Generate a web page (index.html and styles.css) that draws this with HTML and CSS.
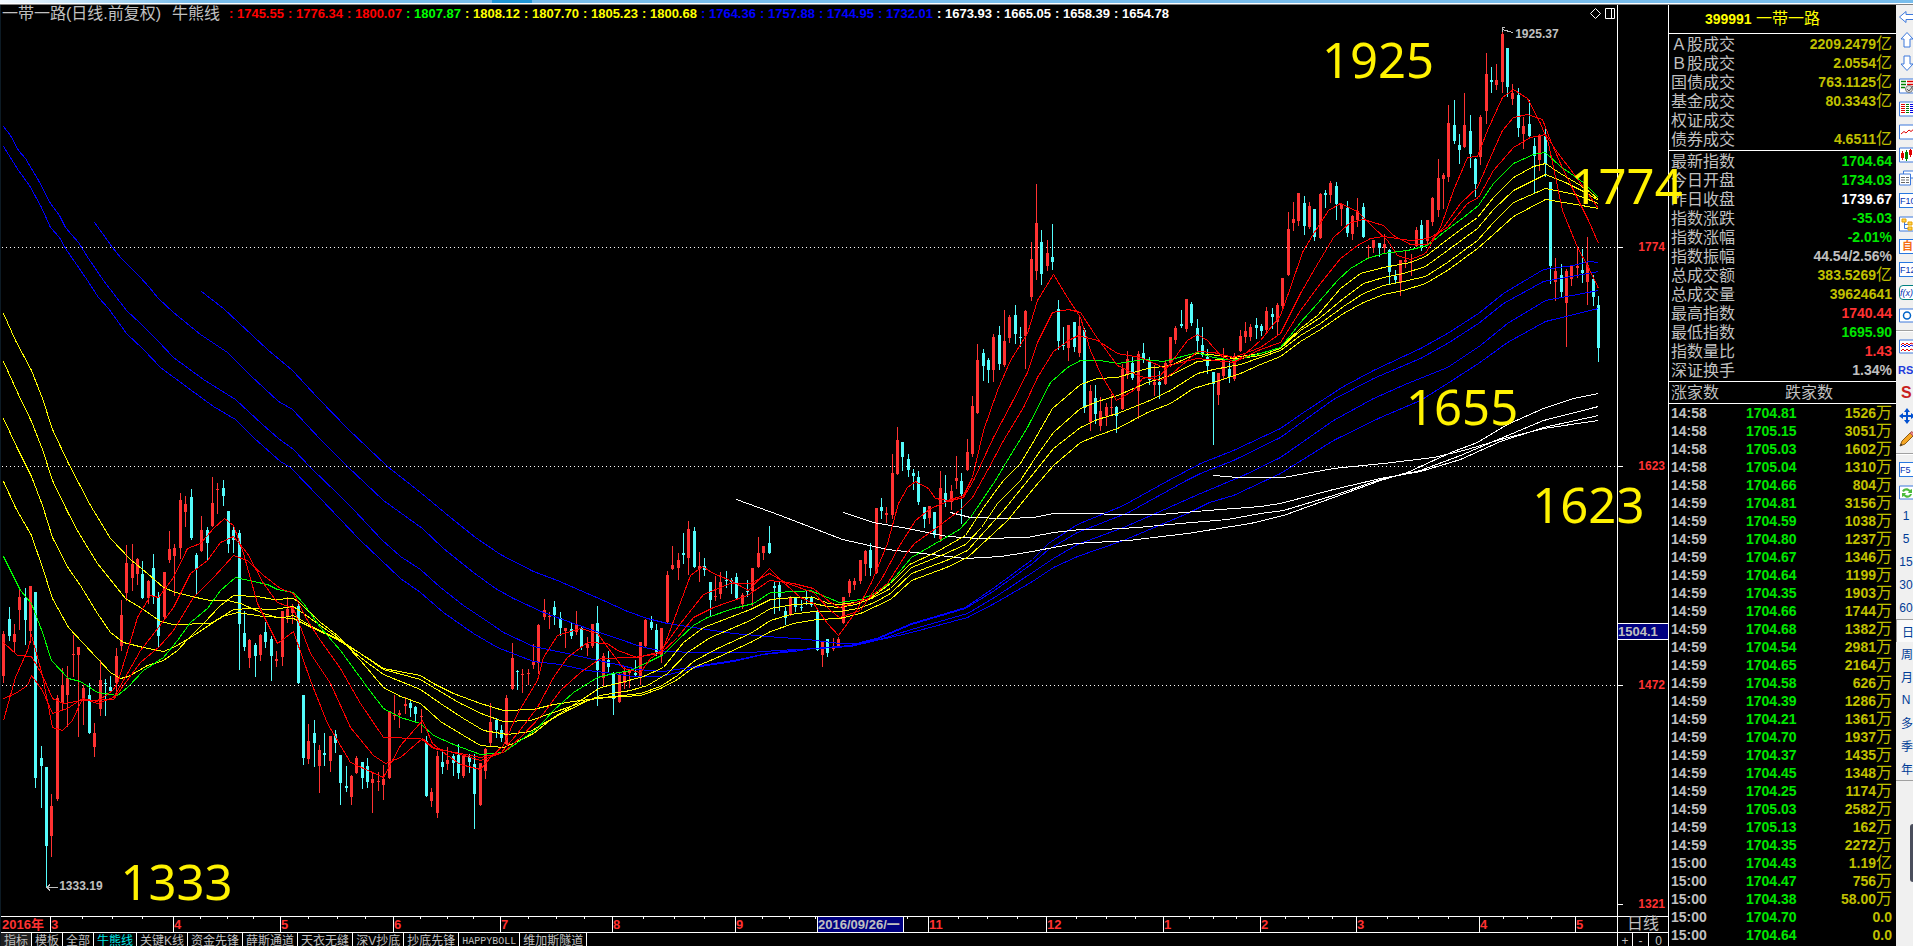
FILE: index.html
```html
<!DOCTYPE html>
<html lang="zh-CN">
<head>
<meta charset="utf-8">
<title>399991 一带一路</title>
<link rel="stylesheet" href="styles.css">
</head>
<body>
<div class="strip"><span class="strip-tab"></span></div>
<main class="app">
  <section class="chart">
    <div class="plot">
      <svg class="plot-svg" id="plot" viewBox="1 5 1616 911" preserveAspectRatio="none" aria-label="日线图"></svg>
      <header class="legend">
        <h1 class="legend-title"><span>一带一路(日线.前复权)</span><span>牛熊线</span></h1>
        <ul class="legend-values">
          <li class="red">: 1745.55</li><li class="red">: 1776.34</li><li class="red">: 1800.07</li><li class="green">: 1807.87</li><li class="yellow">: 1808.12</li><li class="yellow">: 1807.70</li><li class="yellow">: 1805.23</li><li class="yellow">: 1800.68</li><li class="blue">: 1764.36</li><li class="blue">: 1757.88</li><li class="blue">: 1744.95</li><li class="blue">: 1732.01</li><li class="white">: 1673.93</li><li class="white">: 1665.05</li><li class="white">: 1658.39</li><li class="white">: 1654.78</li>
        </ul>
        <svg class="legend-icons" width="28" height="14" viewBox="0 0 28 14"><path d="M1.500 6.500L6.500 1.500L11.500 6.500L6.500 11.500Z M16.500 1.500H25.500V11.500H16.500Z M22.500 1.500V11.500" fill="none" stroke="#fff"/></svg>
      </header>
      <span class="extreme extreme-high">1925.37</span>
      <span class="extreme extreme-low">1333.19</span>
    </div>
    <div class="price-axis" id="price-axis"><span class="cursor-price">1504.1</span></div>
    <div class="time-axis" id="time-axis"><span class="year">2016年</span><span class="cursor-date">2016/09/26/一</span></div>
    <div class="period">日线</div>
    <nav class="tabs">
      <button class="tab selected">指标</button><button class="tab">模板</button><button class="tab">全部</button><button class="tab active">牛熊线</button><button class="tab">关键K线</button><button class="tab">资金先锋</button><button class="tab">薛斯通道</button><button class="tab">天衣无缝</button><button class="tab">深V抄底</button><button class="tab">抄底先锋</button><button class="tab latin">HAPPYBOLL</button><button class="tab">维加斯隧道</button>
    </nav>
    <div class="zoomers"><button>+</button><button>-</button><button>0</button></div>
  </section>

  <aside class="quotes">
    <h2 class="quotes-title"><b>399991</b> 一带一路</h2>
    <table class="facts">
      <tr><th>Ａ股成交</th><td class="gold">2209.2479<i>亿</i></td></tr>
      <tr><th>Ｂ股成交</th><td class="gold">2.0554<i>亿</i></td></tr>
      <tr><th>国债成交</th><td class="gold">763.1125<i>亿</i></td></tr>
      <tr><th>基金成交</th><td class="gold">80.3343<i>亿</i></td></tr>
      <tr><th>权证成交</th><td></td></tr>
      <tr><th>债券成交</th><td class="gold">4.6511<i>亿</i></td></tr>
    </table>
    <table class="facts">
      <tr><th>最新指数</th><td class="up">1704.64</td></tr>
      <tr><th>今日开盘</th><td class="up">1734.03</td></tr>
      <tr><th>昨日收盘</th><td class="white">1739.67</td></tr>
      <tr><th>指数涨跌</th><td class="up">-35.03</td></tr>
      <tr><th>指数涨幅</th><td class="up">-2.01%</td></tr>
      <tr><th>指数振幅</th><td>44.54/2.56%</td></tr>
      <tr><th>总成交额</th><td class="gold">383.5269<i>亿</i></td></tr>
      <tr><th>总成交量</th><td class="gold">39624641</td></tr>
      <tr><th>最高指数</th><td class="hot">1740.44</td></tr>
      <tr><th>最低指数</th><td class="up">1695.90</td></tr>
      <tr><th>指数量比</th><td class="hot">1.43</td></tr>
      <tr><th>深证换手</th><td>1.34%</td></tr>
    </table>
    <div class="breadth"><span>涨家数</span><span>跌家数</span></div>
    <table class="ticks"><tbody id="ticks"></tbody></table>
  </aside>

  <nav class="tools">
    <button aria-label="后退"><svg width="22" height="16" viewBox="0 0 22 16"><path d="M.5 8L7 2.500V5.500H18V10.500H7V13.500Z" fill="#fff" stroke="#3c78dc"/></svg></button>
    <button aria-label="上"><svg width="22" height="16" viewBox="0 0 22 16"><path d="M8 .5L14 7H11V15H5V7H2Z" fill="#fff" stroke="#3c78dc"/></svg></button>
    <button aria-label="下"><svg width="22" height="16" viewBox="0 0 22 16"><path d="M8 15.500L14 9H11V1H5V9H2Z" fill="#fff" stroke="#3c78dc"/></svg></button>
    <button aria-label="报表"><svg width="22" height="16" viewBox="0 0 22 16"><path d="M.5 1H21V15H.5Z" fill="#fff" stroke="#3c78dc"/><path d="M2 3.500H7M2 6.500H7M2 9.500H6" stroke="#008000" stroke-width="1.500"/><path d="M8 3.500H14M8 6.500H14" stroke="#e00000" stroke-width="1.500"/><circle cx="10" cy="11" r="3.500" fill="#ddd" stroke="#777"/><path d="M8 11L10 13L14 8" fill="none" stroke="#555"/></svg></button>
    <button aria-label="列表"><svg width="22" height="16" viewBox="0 0 22 16"><path d="M.5 1H21V15H.5Z" fill="#fff" stroke="#3c78dc"/><g stroke-dasharray="1 1"><path d="M4 3V13" stroke="#e00000" stroke-width="4"/><path d="M8.500 3V13" stroke="#008000" stroke-width="3"/><path d="M12.500 3V13" stroke="#0000e0" stroke-width="3"/></g></svg></button>
    <button aria-label="走势"><svg width="22" height="16" viewBox="0 0 22 16"><path d="M.5 1H21V15H.5Z" fill="#fff" stroke="#3c78dc"/><path d="M2 10L5 7.500L7 9L10 6L12 7.500L16 4" fill="none" stroke="#e00000"/></svg></button>
    <button aria-label="K线"><svg width="22" height="16" viewBox="0 0 22 16"><path d="M.5 1H21V15H.5Z" fill="#fff" stroke="#3c78dc"/><path d="M2 6H5V11H2ZM3 4H4V13H3ZM10 3H13V8H10ZM11 2H12V10H11Z" fill="#e00000"/><path d="M6 5H9V12H6ZM7 3H8V14H7Z" fill="#008000"/></svg></button>
    <button aria-label="窗口"><svg width="22" height="16" viewBox="0 0 22 16"><path d="M4.500 1H21V8H4.500Z" fill="#fff" stroke="#3c78dc"/><path d="M.5 4H11.500V15H.5Z" fill="#fff" stroke="#3c78dc"/><path d="M2 7.500H6M7 7.500H10M2 10H6M7 10H10M2 12.500H6M7 12.500H10" stroke="#666"/></svg></button>
    <button><span class="key">F10</span></button>
    <button aria-label="结构"><svg width="22" height="16" viewBox="0 0 22 16"><path d="M.5 1H21V15H.5Z" fill="#fff" stroke="#3c78dc"/><path d="M5.500 6V12.500H10M5.500 8.500H10" fill="none" stroke="#3c78dc"/><path d="M3 3H7V6H3ZM9 6H13V9H9ZM9 11H13V14H9Z" fill="#ffd44d" stroke="#e8a000"/></svg></button>
    <button><span class="key orange">自</span></button>
    <button><span class="key">F12</span></button>
    <button><span class="key fx">f(x)</span></button>
    <button aria-label="圆"><svg width="22" height="16" viewBox="0 0 22 16"><path d="M.5 1H21V14H.5Z" fill="#fff" stroke="#3c78dc"/><circle cx="8" cy="7.500" r="3.500" fill="none" stroke="#0064c8" stroke-width="1.500"/></svg></button>
    <hr>
    <button aria-label="波浪"><svg width="22" height="16" viewBox="0 0 22 16"><path d="M.5 1H21V14H.5Z" fill="#fff" stroke="#3c78dc"/><path d="M2 6L4 4L6 6L8 4L10 6L12 4L14 5M2 12L4 10L6 12L8 10L10 12L12 10L14 11" fill="none" stroke="#e00000"/><path d="M2 8L4 6L6 8L8 6L10 8L12 6L14 7" fill="none" stroke="#0000e0"/></svg></button>
    <button class="rsi">RSI</button>
    <button class="dollar">S</button>
    <button aria-label="移动"><svg width="22" height="16" viewBox="0 0 22 16"><path d="M8 0L11 4H9V7H12V5L16 8L12 11V9H9V12H11L8 16L5 12H7V9H4V11L0 8L4 5V7H7V4H5Z" fill="#0050d0"/></svg></button>
    <button aria-label="画线"><svg width="22" height="16" viewBox="0 0 22 16"><path d="M1 15L3 10L11 2L14 5L6 13Z" fill="#f5a623" stroke="#8a5a14"/><path d="M11 2L13 .5L15 3L14 5Z" fill="#e88" stroke="#a55"/><path d="M1 15L2 12.500L3.500 14Z" fill="#333"/></svg></button>
    <hr>
    <button><span class="key">F5</span></button>
    <button aria-label="刷新"><svg width="22" height="16" viewBox="0 0 22 16"><path d="M.5 1H21V14H.5Z" fill="#fff" stroke="#3c78dc"/><path d="M3 6C4 3 9 2 11 5L13 4V8H9L10 6.500C8 5 6 5 5 7ZM13 9C12 13 7 14 5 11L3 12V8H7L6 9.500C8 11 10 11 11 9Z" fill="#4cbb3c"/></svg></button>
    <button class="num">1</button><button class="num">5</button><button class="num">15</button><button class="num">30</button><button class="num">60</button>
    <button class="han pressed">日</button><button class="han">周</button><button class="han">月</button><button class="num">N</button><button class="han">多</button><button class="han">季</button><button class="han">年</button>
    <div class="tools-rest"><span class="thumb"></span></div>
  </nav>
</main>
<p class="note n1925">1925</p>
<p class="note n1774">1774</p>
<p class="note n1655">1655</p>
<p class="note n1623">1623</p>
<p class="note n1333">1333</p>
<script src="chart.js"></script>
</body>
</html>
```
FILE: styles.css
```css
* { box-sizing: border-box; }
body {
  margin: 0;
  height: 100vh;
  min-height: 946px;
  display: flex;
  flex-direction: column;
  position: relative;
  overflow: hidden;
  background: #000;
  color: #c0c0c0;
  font-family: "Liberation Sans", "Noto Sans CJK SC", sans-serif;
}
h1, h2, p, ul { margin: 0; padding: 0; font-weight: normal; }
button {
  margin: 0;
  padding: 0;
  border: 0;
  background: none;
  color: inherit;
  font: inherit;
}
.strip {
  flex: none;
  height: 5px;
  background: linear-gradient(90deg, #f4fafe 0, #78bdec 10%);
  border-bottom: 1px solid #808080;
  box-shadow: inset 0 -1px #fff;
}
.strip-tab {
  display: block;
  width: 40px;
  height: 3px;
  margin-left: 25.7%;
  background: #1e96d8;
}
.app { flex: 1; display: flex; min-height: 0; }

.chart {
  flex: 1;
  min-width: 0;
  display: grid;
  grid-template-columns: 1fr 51px;
  grid-template-rows: 1fr 16px 14px;
  border-left: 1px solid #0c1a24;
}
.plot { position: relative; border-right: 1px solid #fff; }
.plot-svg { position: absolute; inset: 0; width: 100%; height: 100%; }
.plot-svg path { fill: none; shape-rendering: crispEdges; vector-effect: non-scaling-stroke; }
.plot-svg .fill-up { fill: #ff3232; }
.plot-svg .fill-down { fill: #54fcfc; }
.plot-svg .grid { stroke: #fff; stroke-dasharray: 1 3; }
.plot-svg .arrow { stroke: #c0c0c0; }
.plot-svg .line-red { stroke: #f00; }
.plot-svg .line-green { stroke: #0f0; }
.plot-svg .line-yellow { stroke: #ff0; }
.plot-svg .line-blue { stroke: #00f; }
.plot-svg .line-white { stroke: #fff; }

.legend {
  position: relative;
  display: flex;
  align-items: center;
  height: 18px;
  padding-left: 1px;
}
.legend-title { display: flex; gap: 11px; font-size: 16px; line-height: 18px; width: 227px; white-space: nowrap; }
.legend-values {
  display: flex;
  flex: 1;
  list-style: none;
  font-weight: bold;
  font-size: 13px;
  line-height: 18px;
}
.legend-values li { width: 59px; white-space: pre; }
.red { color: #f00; }
.green { color: #0f0; }
.yellow { color: #ff0; }
.blue { color: #00f; }
.white { color: #fff; }
.extreme { position: absolute; font-weight: bold; font-size: 12px; line-height: 14px; }
.extreme-high { left: 93.7%; top: 22px; }
.extreme-low { left: 3.6%; bottom: 23px; }

.price-axis { position: relative; border-right: 1px solid #fff; }
.price {
  position: absolute;
  left: 0;
  right: 3px;
  margin-top: -8px;
  text-align: right;
  color: #ff3232;
  font-weight: bold;
  font-size: 12px;
  line-height: 16px;
}
.price::before {
  content: "";
  position: absolute;
  left: 0;
  top: 8px;
  width: 5px;
  height: 1px;
  background: #fff;
}
.cursor-price {
  position: absolute;
  top: 67.8%;
  left: 0;
  right: 0;
  height: 17px;
  border: solid #fff;
  border-width: 1px 0;
  background: #000080;
  font-weight: bold;
  font-size: 13px;
  line-height: 15px;
}
.time-axis {
  position: relative;
  border: solid #fff;
  border-width: 1px 1px 0 0;
  color: #ff3232;
  font-weight: bold;
  font-size: 13px;
  line-height: 15px;
}
.year { padding-left: 1px; }
.month { position: absolute; top: 0; height: 15px; border-left: 1px solid #fff; }
.minor { position: absolute; top: 0; width: 1px; height: 2px; background: #fff; }
.cursor-date {
  position: absolute;
  top: 0;
  left: 50.5%;
  width: 87px;
  height: 15px;
  overflow: hidden;
  border: solid #fff;
  border-width: 0 1px;
  background: #000080;
  color: #c0c0c0;
  white-space: nowrap;
}
.period {
  border: solid #fff;
  border-width: 1px 1px 0 0;
  text-align: center;
  font-size: 16px;
  line-height: 13px;
}
.tabs { display: flex; border: solid #fff; border-width: 1px 1px 0 0; overflow: hidden; }
.tab {
  border-right: 1px solid #fff;
  padding: 0 3px;
  height: 17px;
  font-size: 12px;
  line-height: 17px;
  white-space: nowrap;
}
.tab.selected { background: #202020; }
.tab.active { color: #00e6e6; }
.tab.latin { font-family: "Liberation Mono", monospace; font-size: 10px; }
.zoomers {
  display: grid;
  grid-template-columns: 15px 16px 1fr;
  overflow: hidden;
  border: solid #fff;
  border-width: 1px 1px 0 0;
}
.zoomers button { height: 17px; font-size: 12px; line-height: 15px; border-right: 1px solid #fff; }
.zoomers button:last-child { border-right: 0; }

.quotes { flex: none; width: 227px; }
.quotes-title {
  height: 29px;
  border-bottom: 1px solid #fff;
  color: #ff0;
  text-align: center;
  font-size: 16px;
  line-height: 27px;
  padding-right: 40px;
}
.quotes-title b { font-size: 14px; }
.facts, .ticks { width: 100%; border-collapse: collapse; }
.facts { border-bottom: 1px solid #fff; display: block; padding: 1px 0; }
.facts tbody { display: block; }
.facts tr { display: flex; justify-content: space-between; height: 19px; padding: 0 4px 0 2px; line-height: 19px; }
.facts th, .facts td { padding: 0; }
.facts th { font-weight: normal; font-size: 16px; }
.facts td, .ticks td { font-weight: bold; font-size: 14px; white-space: nowrap; }
.quotes i { font-style: normal; font-weight: normal; font-size: 16px; line-height: 0; }
.gold { color: #c0c000; }
.up { color: #00e600; }
.hot { color: #ff3232; }
.breadth {
  display: grid;
  grid-template-columns: 114px 1fr;
  height: 22px;
  padding-left: 2px;
  border-bottom: 1px solid #fff;
  font-size: 16px;
  line-height: 21px;
}
.ticks { table-layout: fixed; }
.ticks td { height: 18px; padding: 0; line-height: 18px; }
.ticks td:nth-child(1) { width: 77px; padding-left: 2px; }
.ticks td:nth-child(2) { width: 70px; }
.ticks td:nth-child(3) { text-align: right; padding-right: 4px; }

.tools { flex: none; width: 17px; overflow: hidden; background: #f0f0f0; display: flex; flex-direction: column; color: #003c96; }
.tools button { flex: none; display: flex; align-items: center; width: 28px; height: 23px; padding-left: 3px; font-size: 12px; }
.tools hr { flex: none; width: 100%; height: 2px; margin: 3px 0; border: 0; border-top: 1px solid #a0a0a0; background: #fff; }
.tools svg { display: block; }
.key { width: 24px; height: 15px; border: 1px solid #2878e0; background: #fff; font-size: 9px; line-height: 14px; text-align: left; color: #0032b4; }
.key.orange { padding-left: 2px; color: #f56e14; font-weight: bold; font-size: 11px; line-height: 13px; }
.key.fx { border-color: #008080; border-radius: 4px; font-style: italic; }
.tools .rsi { font-weight: bold; font-size: 11px; color: #1e3cdc; padding-left: 2px; }
.tools .dollar { font-weight: bold; font-size: 16px; color: #c81e1e; padding-left: 5px; }
.tools .num { width: 20px; justify-content: center; padding-left: 0; }
.tools .han { padding-left: 5px; }
.tools .pressed { border: solid #a0a0a0; border-width: 1px 0 0 1px; background: #fafafa; }
.tools-rest { flex: 1; border-top: 1px solid #a0a0a0; display: flex; justify-content: flex-end; padding-top: 43px; }
.thumb { width: 3px; height: 58px; border-radius: 3px 0 0 3px; background: #4a4e5c; }

.note {
  position: absolute;
  color: #fff200;
  font-family: "Noto Sans", "Open Sans", sans-serif;
  font-size: 49px;
  line-height: 50px;
}
.n1925 { left: 69.1%; top: 3.6%; }
.n1774 { left: 82.1%; top: 16.9%; }
.n1655 { left: 73.5%; top: 40.3%; }
.n1623 { left: 80.1%; top: 50.6%; }
.n1333 { left: 6.3%; top: 90.5%; }
```
FILE: chart.js
```js
// Candles: direction (r = rise, c = fall), then high, body top, body bottom, low.
const candles = `
r631,634,676,682 c607,619,636,640 r624,634,642,652 r589,597,610,629 c588,598,620,644 r586,586,631,642 c592,592,778,787 c746,758,766,807 c767,767,846,887 r794,806,836,856
r695,698,799,800 r668,685,703,709 r666,678,695,726 r635,654,655,676 r647,647,655,736 r685,688,699,724 c683,695,733,733 r723,733,747,756 r660,680,709,715 c679,683,684,715
c676,687,691,691 r648,656,683,695 r600,615,646,650 r545,563,593,600 r544,564,578,590 r558,559,574,584 c561,574,598,598 r580,581,598,603 c554,568,597,603 c592,597,636,647
r572,572,617,618 r531,549,560,562 r544,548,556,595 r493,500,548,558 r496,504,512,526 c489,497,538,539 c553,555,569,593 r516,530,551,551 c527,530,543,560 r477,503,526,526
r483,489,490,513 c480,488,496,505 c511,511,544,552 c526,530,540,552 c530,533,624,669 c611,633,647,650 r639,640,658,667 c643,645,656,676 r634,635,655,660 c622,632,642,647
c636,639,656,680 r651,659,661,666 r611,611,657,665 r597,609,617,622 r604,607,613,623 c602,606,683,683 c695,695,758,764 r724,741,759,763 c720,733,743,766 r745,750,766,792
c733,753,755,765 r736,736,761,771 c730,734,743,752 c755,755,783,804 c766,786,788,791 r775,776,797,804 r756,758,773,773 c762,762,778,788 c758,766,782,787 r772,779,783,812
r772,781,782,790 r765,779,785,799 r711,711,778,778 r695,715,716,719 r710,713,715,727 r697,704,706,713 c699,703,708,716 c706,707,714,722 r709,716,717,732 c736,741,796,796
r788,792,801,806 r751,756,813,817 c750,762,767,773 r747,760,764,769 c754,756,763,775 c744,755,773,778 r755,755,776,777 c754,757,762,772 c754,764,794,828 r763,763,805,805
r748,749,771,778 r703,722,743,745 c718,720,730,737 c725,730,738,741 r695,698,744,744 r643,658,689,689 c670,671,672,689 r669,674,675,692 r669,673,674,684 r644,662,665,668
r624,625,663,673 r599,610,617,619 r612,616,617,628 c601,607,615,624 c612,618,628,635 r628,628,631,647 c622,629,636,638 r611,625,632,634 c626,628,647,649 r637,644,648,655
r624,624,646,647 c606,623,670,705 r653,656,678,686 c651,660,667,672 c672,673,699,714 r673,674,702,702 r667,672,683,688 r669,671,673,687 c660,673,675,676 r642,642,676,684
r619,620,646,647 c616,622,628,629 c624,630,653,655 r628,628,655,662 r571,575,622,622 r546,565,569,569 r553,560,568,579 c533,553,555,563 r521,529,558,574 c527,531,567,567
r552,566,569,581 c558,566,570,575 c582,582,600,616 r576,596,597,600 r572,582,594,598 c571,580,581,587 c578,580,582,593 c573,577,598,598 r593,595,604,608 c580,591,592,596
r568,568,591,605 r537,553,567,567 r546,546,553,559 c526,543,553,553 c581,586,588,613 c581,585,597,610 c607,611,618,624 r596,597,615,615 c597,598,607,611 c600,607,608,610
c590,598,599,604 c596,597,605,606 c609,611,650,650 r642,642,655,666 c639,639,653,656 r638,648,649,650 r637,639,646,646 r597,597,623,623 r579,581,593,596 r578,581,585,589
r560,560,581,583 r550,551,564,575 c543,550,568,575 r508,508,573,573 c498,507,511,518 r507,513,515,522 r454,473,515,518 r427,440,474,474 c442,442,457,470 c454,459,470,476
c469,473,476,489 c471,477,502,504 c507,507,519,527 r506,506,518,523 c512,512,535,537 r471,488,539,541 c475,493,502,506 r485,491,502,509 r456,478,481,488 c473,481,494,523
r439,452,470,470 r396,406,454,456 r344,360,413,413 c349,353,366,380 c358,360,370,382 r334,337,370,381 c326,335,364,369 r310,341,365,366 r315,317,338,342 c305,315,334,343
c327,337,338,346 r310,311,336,368 r242,259,297,300 r184,223,271,279 c230,242,274,284 r240,253,266,270 c224,257,262,269 c300,309,341,349 c327,345,346,349 r325,325,348,360
c322,322,347,351 r315,326,353,356 c328,330,408,412 r385,391,422,430 c385,398,414,423 r397,411,426,430 r403,407,416,425 r394,407,408,415 c406,407,416,432 r364,369,409,409
r351,359,374,378 c357,363,378,379 r351,354,391,418 c343,353,359,362 c357,361,380,384 r365,382,385,395 c371,382,385,398 r361,363,384,384 r337,337,363,366 r326,328,340,343
c310,324,326,327 r299,299,329,331 c302,304,323,325 c319,328,341,351 c327,345,355,356 c349,357,366,373 c372,372,384,444 r373,373,395,404 r348,359,376,379 c361,369,377,382
r353,356,379,380 r330,336,351,351 r322,331,337,342 r324,327,337,340 c318,325,328,338 c324,326,331,335 r307,311,330,332 c308,314,317,328 r303,305,322,334 r278,278,306,309
r212,229,275,275 r202,219,223,230 r193,193,221,225 c196,203,226,234 r202,206,227,228 c209,209,237,240 r193,194,238,238 c190,193,195,207 r181,183,195,202 c182,186,204,219
r203,204,209,225 c201,208,233,236 r215,216,234,239 r198,211,220,226 c203,207,237,237 r245,247,248,258 r240,240,248,252 c243,243,248,256 r234,244,248,252 c249,250,272,283
c270,276,280,282 r260,260,283,295 r251,260,262,267 r254,261,262,275 r227,230,246,246 c220,225,247,250 r220,220,241,245 r197,198,222,225 r159,178,210,216 r173,175,179,208
r105,123,177,181 c100,125,141,143 c134,145,150,163 r93,125,147,147 c115,131,154,167 c158,159,184,196 r115,117,157,164 r53,74,111,123 c67,80,82,92 r64,80,85,89
r28,34,82,92 c48,48,87,96 r84,93,99,104 c88,95,128,136 r117,126,134,148 c100,124,136,136 c138,146,156,193 r134,135,160,170 c129,136,164,176 c182,182,266,283
r258,271,282,300 c264,275,292,296 r269,271,303,346 r266,266,279,285 r249,266,268,277 c249,270,273,282 r237,265,282,304 c275,279,297,305 c296,305,348,361
`.trim().split(/\s+/);

// Moving averages: colour, then the points of the line.
const averages = [
  ['blue', '3,146 18,170 29,185 41,207 50,227 59,237 65,248 74,261 87,280 98,297 108,308 126,333 143,349 160,367 187,387 213,406 235,419 253,437 280,461 290,467 320,498 359,539 400,578 420,592 443,612 473,633 497,647 533,661 560,664 587,670 613,673 633,676 660,676 677,672 700,666 733,661 763,654 793,651 813,648 850,645 860,642 876,638 911,623 935,616 965,607 994,587 1032,559 1048,543 1077,524 1123,505 1168,480 1200,463 1233,450 1280,428 1303,412 1343,386 1373,370 1420,348 1447,333 1478,313 1503,293 1543,269 1573,265 1588,261 1598,262'],
  ['blue', '3,126 10,135 18,150 25,158 37,178 50,203 59,215 65,227 78,242 88,258 103,280 126,310 140,323 157,340 173,357 203,379 235,399 262,424 278,438 293,449 310,467 337,493 353,509 381,539 400,556 420,569 440,587 463,605 490,623 503,632 533,646 567,653 593,659 617,664 637,669 663,671 683,668 707,664 733,660 767,653 800,649 850,646 876,639 911,624 965,608 994,590 1032,563 1048,549 1077,532 1128,512 1186,480 1200,473 1233,460 1280,437 1333,399 1373,378 1420,358 1447,343 1478,323 1503,303 1543,281 1598,271'],
  ['blue', '94,222 102,233 112,247 120,257 139,276 149,287 157,297 173,312 200,334 227,352 250,375 278,401 292,409 320,439 347,466 383,500 422,528 443,548 473,572 495,588 513,598 543,612 573,623 593,630 617,638 640,646 663,651 700,652 750,652 777,650 817,648 850,646 876,640 911,629 967,613 994,597 1032,572 1053,558 1077,544 1123,527 1155,513 1200,493 1243,475 1280,457 1333,420 1373,398 1407,383 1447,367 1480,345 1507,323 1545,300 1598,290'],
  ['blue', '201,291 223,308 238,322 267,349 292,370 317,397 348,429 387,466 420,492 450,517 475,537 500,554 533,571 557,580 580,590 603,600 627,611 647,618 667,623 693,627 733,633 767,636 807,639 840,643 860,643 885,638 911,632 967,617 994,603 1032,581 1053,567 1077,556 1123,540 1187,513 1209,502 1233,495 1280,473 1333,440 1380,417 1420,400 1447,383 1478,363 1507,342 1545,321 1598,308'],
  ['white', '736,499 780,515 842,539 887,549 914,552 965,558 1000,556 1026,552 1075,543 1128,540 1187,533 1250,523 1283,515 1333,497 1380,480 1407,472 1433,460 1453,451 1477,442 1507,424 1543,408 1573,398 1598,393'],
  ['white', '843,512 873,522 907,528 947,536 980,538 1027,537 1053,532 1080,529 1103,529 1137,527 1180,523 1227,519 1260,513 1283,510 1333,495 1380,479 1420,470 1460,455 1500,438 1543,420 1598,406'],
  ['white', '950,512 970,517 1007,518 1033,517 1053,513 1093,513 1113,514 1160,514 1207,510 1260,506 1280,503 1333,489 1380,478 1420,471 1460,459 1500,441 1543,427 1598,415'],
  ['white', '1213,475 1237,477 1283,477 1333,468 1383,463 1433,457 1467,449 1500,439 1543,428 1598,420'],
  ['yellow', '3,313 15,340 31,370 42,398 52,429 68,463 90,505 110,538 130,559 147,573 163,587 175,592 200,598 210,600 227,600 240,603 263,613 277,617 293,618 313,628 333,637 360,653 383,668 420,675 433,683 453,693 480,703 503,710 533,709 553,704 580,700 607,697 640,695 660,688 677,679 693,667 717,657 750,642 770,631 793,623 817,619 839,618 860,613 890,599 911,580 946,567 967,557 1007,520 1033,488 1053,465 1080,442 1097,435 1117,428 1147,412 1170,403 1193,388 1213,382 1240,373 1260,364 1280,356 1300,341 1320,329 1343,313 1363,302 1383,294 1403,290 1425,283 1447,270 1477,248 1493,234 1513,216 1545,199 1570,203 1598,208'],
  ['yellow', '3,361 17,392 31,421 42,449 52,480 68,513 78,532 97,563 125,598 143,609 160,621 173,624 210,623 222,616 237,612 263,616 283,617 293,615 313,627 337,638 360,653 383,669 420,679 433,687 460,703 483,714 503,721 530,720 550,713 573,705 593,698 613,696 640,693 660,686 677,675 693,661 717,648 750,633 770,620 790,614 813,611 839,611 858,608 874,602 890,593 911,573 946,560 967,550 1003,510 1033,473 1053,448 1080,427 1097,419 1117,413 1147,401 1170,390 1197,373 1213,369 1240,364 1260,357 1280,350 1300,335 1320,323 1343,306 1363,293 1383,285 1403,281 1425,276 1447,262 1477,240 1493,222 1513,202 1545,188 1575,194 1598,203'],
  ['yellow', '3,418 17,448 31,476 42,505 52,537 68,568 80,585 97,613 110,632 123,642 143,647 163,651 173,647 190,637 213,622 233,609 250,608 273,609 293,606 310,618 337,637 360,657 383,674 420,689 440,703 463,718 483,730 507,734 530,731 543,723 567,710 590,699 600,695 630,690 647,685 667,673 687,652 710,637 750,620 770,608 793,604 813,603 827,606 839,607 855,604 871,598 890,588 911,567 941,555 965,544 981,527 997,503 1020,480 1035,457 1053,432 1080,408 1097,401 1117,395 1147,382 1170,375 1197,361 1220,359 1240,358 1260,355 1280,348 1300,330 1320,317 1343,298 1363,283 1383,277 1403,273 1425,266 1447,250 1477,228 1493,209 1513,190 1545,174 1565,182 1585,192 1598,200'],
  ['yellow', '3,481 15,507 31,535 42,567 52,598 68,627 97,658 110,672 120,678 128,676 147,665 163,660 177,650 187,639 203,623 220,605 233,595 257,596 273,599 293,598 300,603 320,622 337,635 360,660 383,687 400,696 420,703 440,721 463,735 480,745 503,747 517,741 533,733 553,717 577,702 600,687 617,683 643,676 663,667 683,642 703,627 750,609 770,599 793,597 813,597 828,603 839,604 855,602 871,597 890,583 909,564 935,552 965,535 983,507 1003,480 1020,463 1032,443 1052,408 1080,384 1097,378 1117,377 1133,372 1147,368 1170,365 1197,353 1210,354 1233,357 1260,353 1280,347 1300,328 1317,315 1340,288 1360,273 1383,267 1410,262 1425,256 1443,242 1463,227 1477,217 1493,197 1513,177 1533,166 1545,163 1560,173 1580,185 1590,192 1598,199'],
  ['green', '3,556 20,590 31,603 42,632 51,660 68,678 80,681 97,692 117,695 127,687 143,670 163,657 177,640 190,622 207,608 220,590 235,577 253,581 267,584 277,589 293,592 303,603 320,627 340,650 367,687 383,708 400,717 420,723 433,735 453,744 480,754 503,752 517,742 537,728 553,710 573,692 597,677 613,673 630,670 647,662 663,654 677,640 693,625 707,617 733,608 753,603 770,592 800,591 810,590 827,597 839,602 860,599 874,593 890,582 911,557 935,543 959,529 970,517 995,480 1005,463 1027,427 1050,382 1067,367 1080,360 1100,360 1117,363 1143,359 1163,361 1197,352 1213,357 1233,360 1260,353 1280,347 1290,335 1300,322 1317,303 1337,280 1350,268 1367,258 1383,253 1407,250 1427,245 1443,232 1463,217 1478,205 1493,183 1513,163 1533,154 1545,152 1560,166 1583,182 1598,197'],
  ['red', '3,720 15,677 27,650 31,635 42,675 52,727 62,730 72,720 82,698 97,701 112,690 117,683 125,657 137,617 150,595 158,597 173,577 187,548 200,543 213,528 224,518 233,525 243,553 257,603 277,643 293,631 310,680 327,723 350,762 383,777 400,745 422,720 432,743 447,755 460,764 480,769 490,757 503,745 517,713 537,680 543,657 557,635 580,628 597,633 608,648 623,668 640,672 650,658 662,650 677,610 690,575 702,566 713,573 730,580 748,590 769,568 783,582 800,597 813,603 827,623 838,635 855,612 871,582 887,543 898,503 907,487 915,481 928,488 935,498 947,500 963,495 972,477 983,430 997,390 1010,360 1027,333 1037,300 1053,274 1067,297 1080,317 1090,350 1100,373 1116,400 1133,390 1142,378 1160,375 1170,363 1187,340 1197,334 1207,340 1220,355 1235,362 1260,340 1280,315 1290,287 1302,252 1312,235 1328,210 1340,203 1357,211 1373,227 1387,240 1397,255 1410,259 1425,253 1440,227 1453,190 1467,157 1477,156 1487,130 1502,97 1513,89 1527,98 1540,123 1548,143 1562,210 1577,247 1588,267 1598,288'],
  ['red', '3,698 15,693 27,685 31,675 42,690 52,713 67,708 82,698 97,703 113,697 123,680 140,650 158,627 173,607 190,573 207,560 220,542 233,536 247,553 263,583 277,602 293,608 310,653 330,683 350,727 373,755 385,763 400,757 422,738 433,747 460,754 480,760 500,753 517,733 537,707 553,677 567,657 587,642 607,643 617,650 637,657 660,651 680,623 703,594 730,583 750,583 769,573 787,583 813,592 830,610 839,617 860,610 882,577 898,547 915,520 930,508 947,501 963,497 973,480 993,437 1010,405 1027,372 1037,342 1052,312 1068,309 1080,312 1097,338 1117,365 1140,376 1160,380 1173,372 1197,351 1213,352 1233,357 1260,347 1280,333 1300,293 1315,267 1333,237 1350,222 1363,219 1383,225 1393,235 1410,244 1427,244 1443,227 1460,203 1477,187 1490,157 1502,130 1513,117 1527,114 1542,119 1550,140 1560,163 1573,190 1588,220 1598,243'],
  ['red', '3,642 17,655 31,656 42,675 52,698 63,703 82,700 113,699 123,685 140,662 158,647 173,630 193,597 213,577 233,555 247,560 263,575 280,588 293,593 307,620 320,640 340,668 360,703 383,737 420,738 433,748 460,753 480,757 503,752 520,737 543,713 560,690 580,672 600,658 633,657 660,653 677,637 693,617 713,607 747,595 769,580 793,583 813,588 830,602 839,607 868,598 887,583 906,553 914,543 935,528 959,510 972,497 987,470 1003,440 1023,407 1037,377 1053,351 1068,340 1078,335 1097,340 1117,353 1140,357 1163,367 1180,362 1197,358 1233,362 1260,349 1280,342 1300,310 1320,283 1340,258 1357,245 1370,238 1383,236 1410,240 1428,238 1447,227 1467,203 1478,197 1493,170 1513,147 1530,137 1545,134 1557,152 1573,173 1598,208']
];

const plot = document.getElementById('plot');
function addPath(cls, d) {
  const p = document.createElementNS('http://www.w3.org/2000/svg', 'path');
  p.setAttribute('class', cls);
  p.setAttribute('d', d);
  plot.appendChild(p);
}

addPath('grid', [247, 466, 685].map(y => `M2 ${y + 0.5}H1617`).join(''));

const bars = { r: '', c: '' };
candles.forEach((c, i) => {
  const [high, top, bottom, low] = c.slice(1).split(',').map(Number);
  const x = Math.floor(3.7 + i * 5.352);
  bars[c[0]] += `M${x} ${high}h1V${low + 1}h-1ZM${x - 1} ${top}h3V${bottom}h-3Z`;
});
addPath('fill-up', bars.r);
addPath('fill-down', bars.c);
averages.forEach(([colour, points]) => {
  addPath('line-' + colour, 'M' + points.split(' ').map(p => {
    const [x, y] = p.split(',').map(Number);
    return `${x + 0.5} ${y + 0.5}`;
  }).join('L'));
});
addPath('arrow', 'M1513 32.500L1502 29.500M1505 27.500H1502V32M58 887.500H47M50 884.500L47 887.500L50 890.500');

// Price axis: position down the plot in percent.
const priceAxis = document.getElementById('price-axis');
[[1774, 247], [1623, 466], [1472, 685], [1321, 904]].forEach(([value, y]) => {
  const s = document.createElement('span');
  s.className = 'price';
  s.textContent = value;
  s.style.top = (y - 5) / 911 * 100 + '%';
  priceAxis.appendChild(s);
});

// Time axis: month starts and week marks along the plot width.
const timeAxis = document.getElementById('time-axis');
function mark(cls, x, text) {
  const s = document.createElement('span');
  s.className = cls;
  s.textContent = text;
  s.style.left = (x - 1) / 1616 * 100 + '%';
  timeAxis.appendChild(s);
}
[[50, 3], [173, 4], [280, 5], [393, 6], [500, 7], [612, 8], [735, 9], [928, 11], [1046, 12], [1163, 1], [1260, 2], [1356, 3], [1479, 4], [1575, 5]]
  .forEach(([x, m]) => mark('month', x, m));
[82, 112, 142, 200, 227, 253, 308, 337, 365, 420, 447, 473, 528, 556, 584, 643, 674, 704, 762, 789, 815, 907, 958, 987, 1017, 1076, 1106, 1135, 1189, 1213, 1236, 1285, 1308, 1332, 1387, 1418, 1448, 1503, 1527, 1551]
  .forEach(x => mark('minor', x, ''));

const deals = `14:58 1704.81 1526万
14:58 1705.15 3051万
14:58 1705.03 1602万
14:58 1705.04 1310万
14:58 1704.66 804万
14:59 1704.81 3156万
14:59 1704.59 1038万
14:59 1704.80 1237万
14:59 1704.67 1346万
14:59 1704.64 1199万
14:59 1704.35 1903万
14:59 1704.66 1744万
14:59 1704.68 1382万
14:59 1704.54 2981万
14:59 1704.65 2164万
14:59 1704.58 626万
14:59 1704.39 1286万
14:59 1704.21 1361万
14:59 1704.70 1937万
14:59 1704.37 1435万
14:59 1704.45 1348万
14:59 1704.25 1174万
14:59 1705.03 2582万
14:59 1705.13 162万
14:59 1704.35 2272万
15:00 1704.43 1.19亿
15:00 1704.47 756万
15:00 1704.38 58.00万
15:00 1704.70 0.0
15:00 1704.64 0.0`;
document.getElementById('ticks').innerHTML = deals.split('\n').map(line => {
  const [time, price, volume] = line.split(' ');
  return `<tr><td>${time}</td><td class="up">${price}</td><td class="gold">${volume.replace(/([万亿])/, '<i>$1</i>')}</td></tr>`;
}).join('');
```
